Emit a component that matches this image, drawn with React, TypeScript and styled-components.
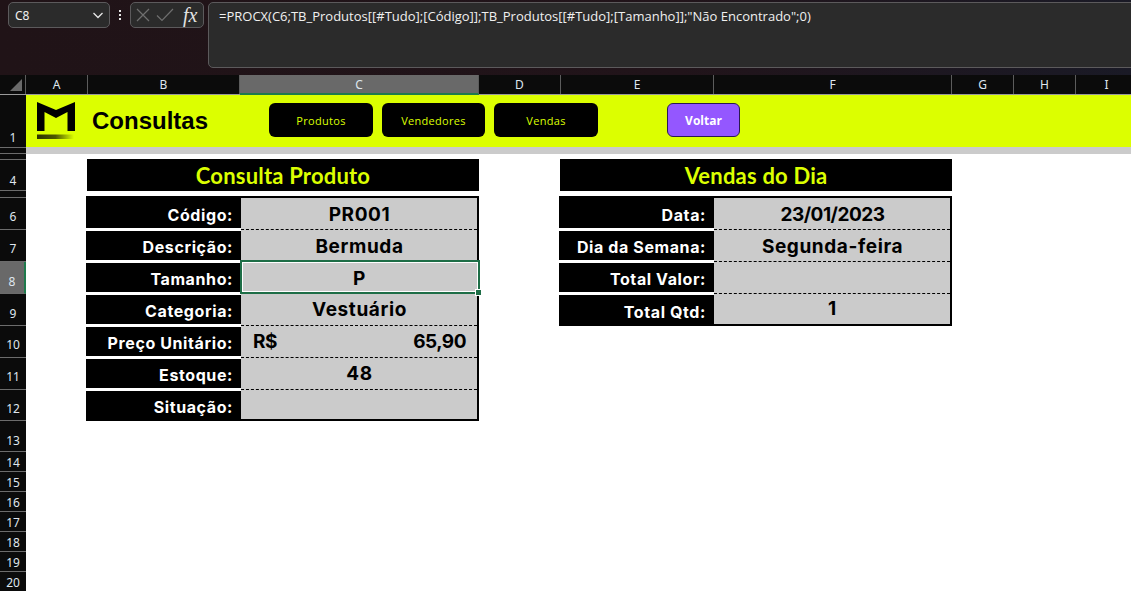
import React from "react"
import styled, { createGlobalStyle } from "styled-components"

const GlobalStyle = createGlobalStyle`
  html, body {
    margin: 0;
    padding: 0;
    background: #fff;
    overflow: hidden;
  }
`

const Page = styled.div`
  width: 1131px;
  height: 591px;
  display: flex;
  flex-direction: column;
  overflow: hidden;
  font-family: "Noto Sans", sans-serif;
`

/* formula bar */
const FormulaBar = styled.div`
  height: 75px;
  flex: none;
  box-sizing: border-box;
  padding: 2px 0 0 8px;
  display: flex;
  align-items: flex-start;
  background: linear-gradient(90deg, #201317 0%, #21141a 60%, #1a1a26 100%);
`

const NameBox = styled.div`
  width: 102px;
  height: 26px;
  box-sizing: border-box;
  border: 1px solid #5c5a5c;
  border-radius: 5px;
  background: #2b2b2b;
  color: #f0f0f0;
  font-size: 12px;
  display: flex;
  align-items: center;
  justify-content: space-between;
  padding: 0 5px 0 6px;
`

const Dots = styled.div`
  width: 20px;
  height: 26px;
  display: flex;
  flex-direction: column;
  align-items: center;
  justify-content: center;
  gap: 2px;
`

const Dot = styled.span`
  width: 2px;
  height: 2px;
  background: #e4e4e4;
`

const FxBox = styled.div`
  width: 74px;
  height: 26px;
  box-sizing: border-box;
  border: 1px solid #5c5a5c;
  border-radius: 5px;
  background: #2b2b2b;
  display: flex;
  align-items: center;
  padding: 0 5px;
  gap: 6px;
`

const FxLabel = styled.span`
  font-family: "Liberation Serif", serif;
  font-style: italic;
  font-size: 20px;
  color: #e2e2e2;
  margin-left: 3px;
  line-height: 1;
`

const FormulaInput = styled.div`
  flex: 1;
  height: 66px;
  margin: 0 -8px 0 4px;
  box-sizing: border-box;
  border: 1px solid #5c5a5c;
  border-radius: 5px;
  background: #2b2b2b;
  color: #f0f0f0;
  font-family: "Open Sans", sans-serif;
  font-size: 13px;
  line-height: 16px;
  padding: 5px 0 0 10px;
  white-space: nowrap;
`

/* headers */
const ColumnHeaders = styled.div`
  height: 20px;
  flex: none;
  display: flex;
  background: #0b0b0b;
  box-sizing: border-box;
  border-bottom: 1px solid #9a9a9a;
`

const Corner = styled.div`
  width: 26px;
  height: 19px;
  flex: none;
  box-sizing: border-box;
  border-right: 1px solid #5c5c5c;
  display: flex;
  justify-content: flex-end;
  align-items: flex-end;
  padding: 0 3px 3px 0;
`

const ColumnCell = styled.div<{ $w: number; $active?: boolean }>`
  width: ${(p) => p.$w}px;
  height: ${(p) => (p.$active ? 20 : 19)}px;
  flex: none;
  box-sizing: border-box;
  display: flex;
  align-items: center;
  justify-content: center;
  font-size: 12px;
  color: #dfe6ee;
  background: ${(p) => (p.$active ? "#696969" : "transparent")};
  border-right: 1px solid #5c5c5c;
  border-bottom: ${(p) => (p.$active ? "2px solid #1e7a4c" : "none")};
`

const Body = styled.div`
  flex: 1;
  display: flex;
  min-height: 0;
`

const RowHeaders = styled.div`
  width: 26px;
  flex: none;
  display: flex;
  flex-direction: column;
  background: #0b0b0b;
`

const RowCell = styled.div<{ $h: number; $pad: number; $active?: boolean }>`
  height: ${(p) => p.$h}px;
  flex: none;
  box-sizing: border-box;
  overflow: hidden;
  display: flex;
  align-items: flex-end;
  justify-content: center;
  font-size: 12px;
  line-height: 16px;
  padding-bottom: ${(p) => p.$pad}px;
  color: #dfe6ee;
  background: ${(p) => (p.$active ? "#696969" : "transparent")};
  border-bottom: 1px solid #6c6c6c;
  border-right: ${(p) => (p.$active ? "2px solid #1e7a4c" : "none")};
`

/* sheet */
const Sheet = styled.div`
  flex: 1;
  display: flex;
  flex-direction: column;
  background: #fff;
`

const Banner = styled.div`
  height: 52px;
  flex: none;
  background: #dcff00;
  display: flex;
  align-items: flex-start;
  padding: 8px 0 0 10px;
  box-sizing: border-box;
`

const Logo = styled.svg`
  width: 40px;
  height: 38px;
  flex: none;
  margin-top: -1px;
`

const BannerTitle = styled.div`
  width: 177px;
  margin-left: 16px;
  flex: none;
  height: 34px;
  display: flex;
  align-items: center;
  font-family: "Liberation Sans", sans-serif;
  font-weight: 700;
  font-size: 24px;
  padding-top: 2px;
  box-sizing: border-box;
  color: #000;
`

const NavButtons = styled.div`
  display: flex;
  gap: 9px;
`

const NavButton = styled.div<{ $w: number }>`
  width: ${(p) => p.$w}px;
  height: 34px;
  background: #000;
  border-radius: 6px;
  color: #dcff00;
  font-family: "Open Sans", sans-serif;
  font-size: 11px;
  letter-spacing: 0.3px;
  display: flex;
  align-items: center;
  justify-content: center;
`

const BackButton = styled.div`
  width: 73px;
  height: 34px;
  margin-left: 69px;
  box-sizing: border-box;
  background: #9457ff;
  border: 1px solid #2a1a50;
  border-radius: 6px;
  color: #fff;
  font-family: "Open Sans", sans-serif;
  font-weight: 700;
  font-size: 12px;
  display: flex;
  align-items: center;
  justify-content: center;
`

const GrayStrip = styled.div`
  height: 7px;
  flex: none;
  background: #cbcbcb;
`

const Panels = styled.div`
  display: flex;
  gap: 80px;
  padding: 5px 0 0 60px;
`

const Panel = styled.section`
  width: 393px;
`

const PanelTitle = styled.div`
  height: 32px;
  margin: 0 0 5px 1px;
  background: #000;
  color: #dcff00;
  font-family: Lato, sans-serif;
  font-weight: 700;
  font-size: 22px;
  letter-spacing: 0.2px;
  display: flex;
  align-items: center;
  justify-content: center;
`

const Table = styled.div`
  border-right: 2px solid #000;
`

const TableRow = styled.div<{ $h: number }>`
  height: ${(p) => p.$h}px;
  display: grid;
  grid-template-columns: 155px 1fr;
`

const Label = styled.div<{ $first?: boolean; $last?: boolean }>`
  margin: ${(p) => (p.$first ? 0 : "1px")} 0 ${(p) => (p.$last ? 0 : "2px")} 0;
  background: #000;
  color: #fff;
  font-family: Inter, sans-serif;
  font-weight: 700;
  font-size: 16px;
  letter-spacing: 0.6px;
  display: flex;
  align-items: flex-end;
  justify-content: flex-end;
  padding: 0 8px ${(p) => (p.$last ? 4 : 3)}px 0;
  line-height: 20px;
`

const Value = styled.div<{
  $first?: boolean
  $last?: boolean
  $selected?: boolean
  $lift?: boolean
  $digits?: boolean
}>`
  position: relative;
  box-sizing: border-box;
  background: #cbcbcb;
  color: #000;
  font-family: Inter, sans-serif;
  font-weight: 700;
  font-size: 19px;
  letter-spacing: ${(p) => (p.$digits ? "-0.5px" : "0.6px")};
  line-height: 24px;
  display: flex;
  align-items: flex-end;
  justify-content: center;
  padding: 0 11px ${(p) => (p.$lift || p.$last ? 3 : 2)}px 12px;
  border-top: ${(p) => (p.$first ? "2px solid #000" : "none")};
  border-bottom: ${(p) => (p.$last ? "2px solid #000" : "1px dashed #000")};

  ${(p) =>
    p.$selected &&
    `
    &::before {
      content: "";
      position: absolute;
      top: -2px;
      left: -1px;
      right: -3px;
      bottom: -1px;
      border: 2px solid #1e6e47;
      box-shadow: inset 0 0 0 1px #fff;
      z-index: 1;
    }
    &::after {
      content: "";
      position: absolute;
      right: -5px;
      bottom: -3px;
      width: 5px;
      height: 5px;
      background: #1e6e47;
      border: 1px solid #fff;
      z-index: 2;
    }
  `}
`

const Currency = styled.div`
  width: 100%;
  display: flex;
  justify-content: space-between;
`

const columns: { name: string; w: number }[] = [
  { name: "A", w: 62 },
  { name: "B", w: 152 },
  { name: "C", w: 239 },
  { name: "D", w: 82 },
  { name: "E", w: 153 },
  { name: "F", w: 238 },
  { name: "G", w: 62 },
  { name: "H", w: 62 },
  { name: "I", w: 62 },
]

const rows: { name: string; h: number; pad: number }[] = [
  { name: "1", h: 53, pad: 1 },
  { name: "", h: 6, pad: 0 },
  { name: "", h: 6, pad: 0 },
  { name: "4", h: 31, pad: 1 },
  { name: "", h: 7, pad: 0 },
  { name: "6", h: 32, pad: 4 },
  { name: "7", h: 32, pad: 4 },
  { name: "8", h: 32, pad: 3 },
  { name: "9", h: 32, pad: 3 },
  { name: "10", h: 32, pad: 4 },
  { name: "11", h: 32, pad: 4 },
  { name: "12", h: 31, pad: 3 },
  { name: "13", h: 31, pad: 2 },
  { name: "14", h: 20, pad: 0 },
  { name: "15", h: 20, pad: 0 },
  { name: "16", h: 20, pad: 0 },
  { name: "17", h: 20, pad: 0 },
  { name: "18", h: 20, pad: 0 },
  { name: "19", h: 20, pad: 0 },
  { name: "20", h: 20, pad: 0 },
]

type Item = {
  label: string
  value: React.ReactNode
  selected?: boolean
  lift?: boolean
  digits?: boolean
}

const produto: Item[] = [
  { label: "Código:", value: "PR001" },
  { label: "Descrição:", value: "Bermuda" },
  { label: "Tamanho:", value: "P", selected: true },
  { label: "Categoria:", value: "Vestuário", lift: true },
  {
    label: "Preço Unitário:",
    lift: true,
    digits: true,
    value: (
      <Currency>
        <span>R$</span>
        <span>65,90</span>
      </Currency>
    ),
  },
  { label: "Estoque:", value: "48", lift: true },
  { label: "Situação:", value: "" },
]

const vendas: Item[] = [
  { label: "Data:", value: "23/01/2023", digits: true },
  { label: "Dia da Semana:", value: "Segunda-feira" },
  { label: "Total Valor:", value: "" },
  { label: "Total Qtd:", value: "1" },
]

function DataTable({ items, lastHeight }: { items: Item[]; lastHeight: number }) {
  return (
    <Table>
      {items.map((item, i) => {
        const first = i === 0
        const last = i === items.length - 1
        return (
          <TableRow key={item.label} $h={first ? 34 : last ? lastHeight : 32}>
            <Label $first={first} $last={last}>
              {item.label}
            </Label>
            <Value
              $first={first}
              $last={last}
              $selected={item.selected}
              $lift={item.lift}
              $digits={item.digits}
            >
              {item.value}
            </Value>
          </TableRow>
        )
      })}
    </Table>
  )
}

export default function App() {
  return (
    <Page>
      <GlobalStyle />
      <FormulaBar>
        <NameBox>
          C8
          <svg width="12" height="12" viewBox="0 0 12 12" fill="none">
            <path d="M1.5 4 L6 8.5 L10.5 4" stroke="#e6e6e6" strokeWidth="1.3" />
          </svg>
        </NameBox>
        <Dots>
          <Dot />
          <Dot />
          <Dot />
        </Dots>
        <FxBox>
          <svg width="14" height="14" viewBox="0 0 14 14" fill="none">
            <path d="M1 1 L13 13 M13 1 L1 13" stroke="#6f6f6f" strokeWidth="1.2" />
          </svg>
          <svg width="18" height="14" viewBox="0 0 18 14" fill="none">
            <path d="M1 7.5 L6 12.5 L17 1" stroke="#6f6f6f" strokeWidth="1.2" />
          </svg>
          <FxLabel>fx</FxLabel>
        </FxBox>
        <FormulaInput>
          =PROCX(C6;TB_Produtos[[#Tudo];[Código]];TB_Produtos[[#Tudo];[Tamanho]];"Não Encontrado";0)
        </FormulaInput>
      </FormulaBar>

      <ColumnHeaders>
        <Corner>
          <svg width="12" height="12" viewBox="0 0 12 12">
            <path d="M12 0 V12 H0 Z" fill="#6a6a6a" />
          </svg>
        </Corner>
        {columns.map((c) => (
          <ColumnCell key={c.name} $w={c.w} $active={c.name === "C"}>
            {c.name}
          </ColumnCell>
        ))}
      </ColumnHeaders>

      <Body>
        <RowHeaders>
          {rows.map((r, i) => (
            <RowCell key={i} $h={r.h} $pad={r.pad} $active={r.name === "8"}>
              {r.name}
            </RowCell>
          ))}
        </RowHeaders>
        <Sheet>
          <Banner>
            <Logo viewBox="0 0 40 38">
              <defs>
                <linearGradient id="logoFade" x1="0" x2="1" y1="0" y2="0">
                  <stop offset="0" stopColor="#000" stopOpacity="0.8" />
                  <stop offset="0.5" stopColor="#000" stopOpacity="0.65" />
                  <stop offset="1" stopColor="#000" stopOpacity="0" />
                </linearGradient>
              </defs>
              <path d="M1 0 L20 8 L39 0 V29 H31.5 V10 L20 16 L8.5 10 V29 H1 Z" fill="#000" />
              <rect x="1" y="32.5" width="37" height="4.5" fill="url(#logoFade)" />
            </Logo>
            <BannerTitle>Consultas</BannerTitle>
            <NavButtons>
              <NavButton $w={104}>Produtos</NavButton>
              <NavButton $w={103}>Vendedores</NavButton>
              <NavButton $w={104}>Vendas</NavButton>
            </NavButtons>
            <BackButton>Voltar</BackButton>
          </Banner>
          <GrayStrip />
          <Panels>
            <Panel>
              <PanelTitle>Consulta Produto</PanelTitle>
              <DataTable items={produto} lastHeight={31} />
            </Panel>
            <Panel>
              <PanelTitle>Vendas do Dia</PanelTitle>
              <DataTable items={vendas} lastHeight={32} />
            </Panel>
          </Panels>
        </Sheet>
      </Body>
    </Page>
  )
}
